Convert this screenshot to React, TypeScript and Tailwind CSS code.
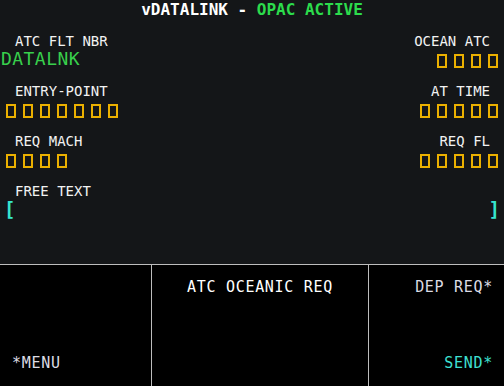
import React from "react";

const mono = { fontFamily: '"DejaVu Sans Mono", "Liberation Mono", monospace' };

function Boxes({ n }: { n: number }) {
  return (
    <div className="flex gap-[7px] pt-[5px]">
      {Array.from({ length: n }).map((_, i) => (
        <span key={i} className="block w-[10px] h-[14px] border-2 border-[#ebb000]" />
      ))}
    </div>
  );
}

function Label({ children, right }: { children: React.ReactNode; right?: boolean }) {
  return (
    <div className={`h-[16px] text-[14px] leading-[16px] text-[#f2f2f2] ${right ? "pr-[14px] text-right" : "pl-[15px]"}`}>
      {children}
    </div>
  );
}

export default function App() {
  return (
    <div className="w-[504px] h-[386px] flex flex-col overflow-hidden bg-black" style={mono}>
      <div className="h-[264px] bg-[#141618] flex flex-col">
        <div className="h-[20px] text-[16px] leading-[20px] font-bold text-center text-white">
          vDATALINK - <span className="text-[#2cdc4c]">OPAC ACTIVE</span>
        </div>
        <div className="mt-[13px] flex flex-col gap-[14px]">
          <div className="flex justify-between">
            <div className="flex flex-col">
              <Label>ATC FLT NBR</Label>
              <div className="h-[20px] pl-[1px] text-[18px] leading-[20px] tracking-[0.45px] text-[#38cf4c]">DATALNK</div>
            </div>
            <div className="flex flex-col items-end">
              <Label right>OCEAN ATC</Label>
              <div className="h-[20px] pr-[6px]"><Boxes n={4} /></div>
            </div>
          </div>
          <div className="flex justify-between">
            <div className="flex flex-col">
              <Label>ENTRY-POINT</Label>
              <div className="h-[20px] pl-[6px]"><Boxes n={7} /></div>
            </div>
            <div className="flex flex-col items-end">
              <Label right>AT TIME</Label>
              <div className="h-[20px] pr-[6px]"><Boxes n={5} /></div>
            </div>
          </div>
          <div className="flex justify-between">
            <div className="flex flex-col">
              <Label>REQ MACH</Label>
              <div className="h-[20px] pl-[6px]"><Boxes n={4} /></div>
            </div>
            <div className="flex flex-col items-end">
              <Label right>REQ FL</Label>
              <div className="h-[20px] pr-[6px]"><Boxes n={5} /></div>
            </div>
          </div>
          <div className="flex flex-col">
            <Label>FREE TEXT</Label>
            <div className="h-[20px] flex justify-between px-[4px] text-[19px] leading-[20px] font-bold text-[#36e6cf]">
              <span>[</span>
              <span>]</span>
            </div>
          </div>
        </div>
      </div>
      <div className="flex-1 border-t border-[#bdbdbd] flex text-[15px] leading-[18px] tracking-[0.7px]">
        <div className="w-[152px] border-r border-[#bdbdbd] flex flex-col justify-end pl-[12px] pb-[14px] text-[#dcdce4]">
          <span>*MENU</span>
        </div>
        <div className="w-[217px] border-r border-[#bdbdbd] pt-[13px] text-center text-white">
          ATC OCEANIC REQ
        </div>
        <div className="flex-1 flex flex-col justify-between items-end pr-[11px] pt-[13px] pb-[14px]">
          <span className="text-[#dcdce4]">DEP REQ*</span>
          <span className="text-[#3ee0d2]">SEND*</span>
        </div>
      </div>
    </div>
  );
}
